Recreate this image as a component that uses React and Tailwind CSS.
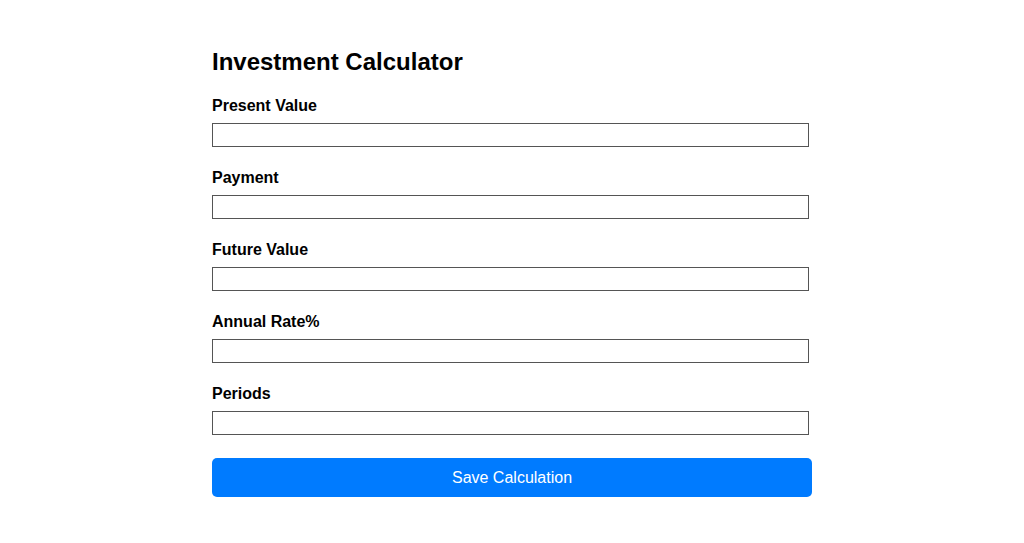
const fields = ["Present Value", "Payment", "Future Value", "Annual Rate%", "Periods"];

const App = () => {
  return (
    <div className="min-h-screen bg-white font-['Liberation_Sans',Arial,sans-serif] text-black">
      <div className="w-[600px] ml-[212px] pt-[48px]">
        <h1 className="text-[24px] leading-[28px] font-bold mb-[20px]">
          Investment Calculator
        </h1>
        {fields.map((label) => (
          <div key={label} className="mb-[21px]">
            <label className="block text-[16px] leading-[18px] font-bold pt-[1px] mb-[8px]">
              {label}
            </label>
            <input
              type="text"
              className="block w-[597px] h-[24px] border border-[#555] bg-white px-[2px] outline-none"
            />
          </div>
        ))}
        <button className="w-[600px] h-[39px] mt-[2px] rounded-[5px] bg-[#007bff] text-white text-[16px]">
          Save Calculation
        </button>
      </div>
    </div>
  );
};

export default App;
